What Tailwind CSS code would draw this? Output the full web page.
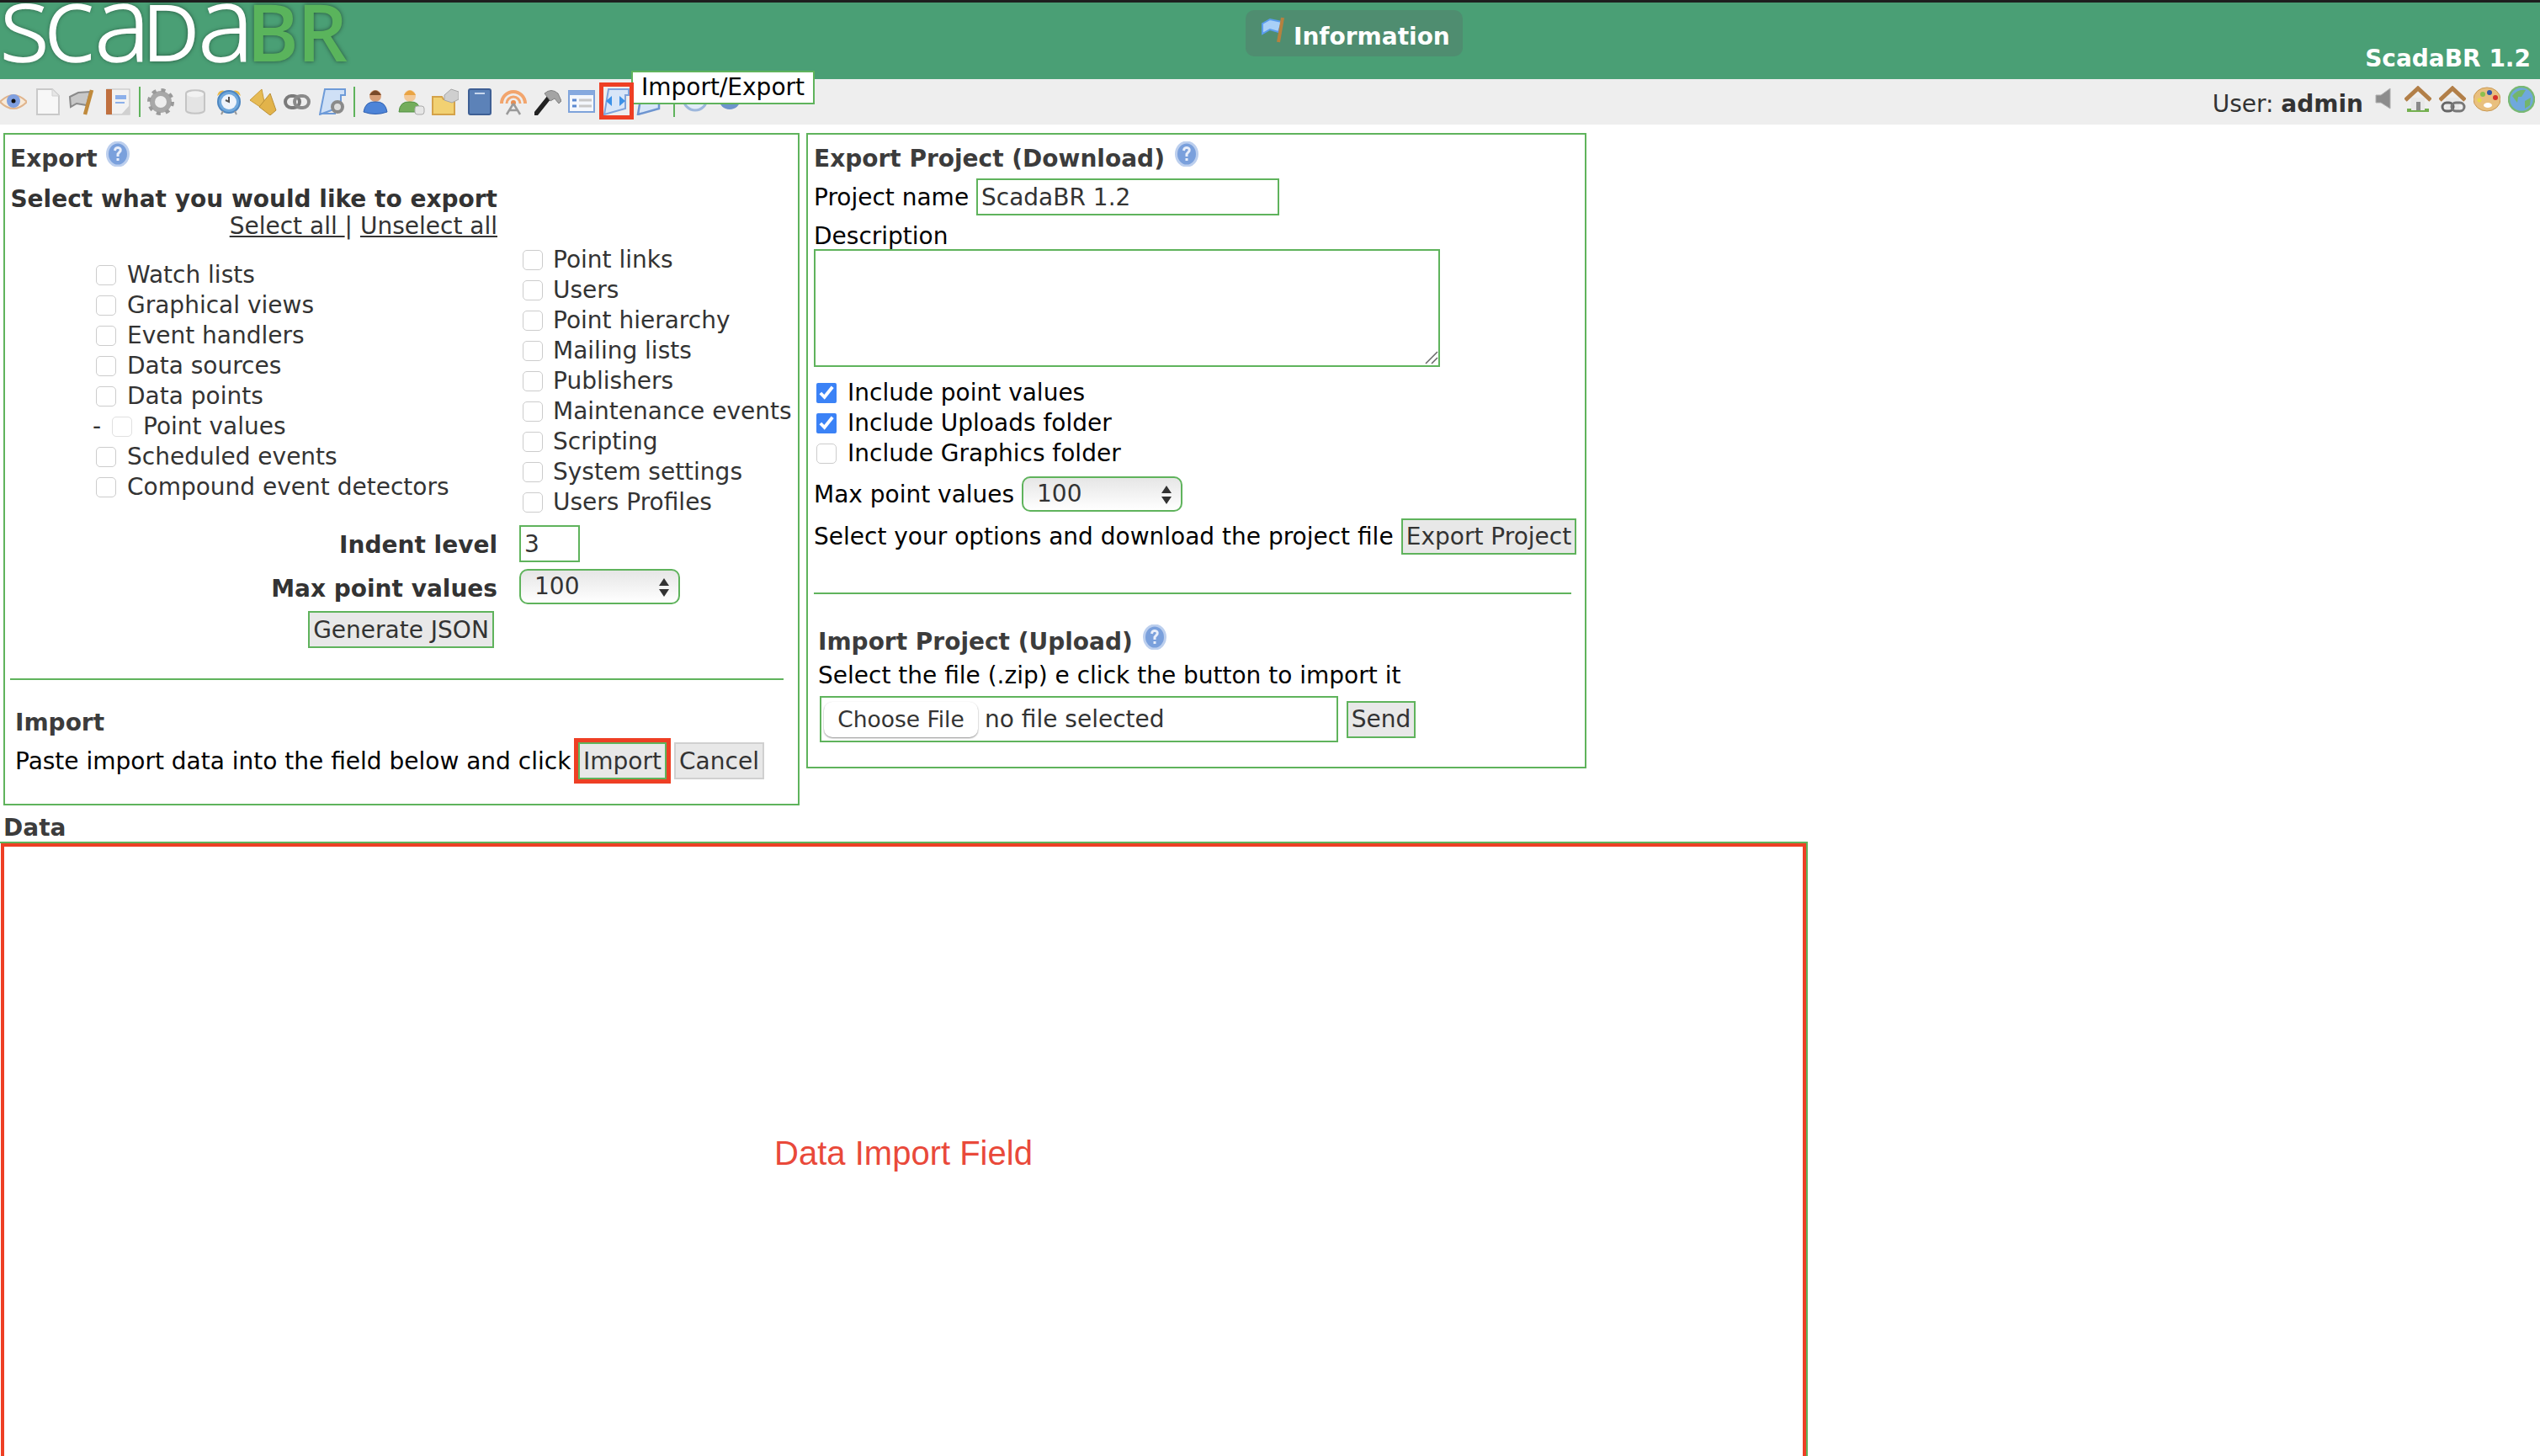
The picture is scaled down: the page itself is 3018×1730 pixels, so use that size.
<!doctype html>
<html lang="en">
<head>
  <meta charset="utf-8">
  <title>ScadaBR - Import/Export</title>
  <script src="https://cdn.jsdelivr.net/npm/@tailwindcss/browser@4"></script>
</head>
<body class="h-[1730px] w-[3018px] overflow-hidden bg-white font-['DejaVu_Sans',sans-serif] text-[28px] leading-[36px] text-[#333]">

  <!-- header -->
  <header class="flex h-[94px] items-start border-t-[3px] border-[#1e1e1e] bg-[#4a9f75]">
    <div class="flex h-[91px] w-[430px] shrink-0 items-baseline pl-[3px] font-['Open_Sans',sans-serif] leading-[42px] text-white [text-shadow:0_0_5px_rgb(0_0_0/0.5)]">
      <span class="-ml-[3px] w-[54px] text-[126px] font-light [-webkit-text-stroke:1.5px_white]">s</span>
      <span class="-ml-[2px] w-[62px] text-[126px] font-light [-webkit-text-stroke:1.5px_white]">c</span>
      <span class="-ml-[2px] w-[63px] text-[126px] font-light [-webkit-text-stroke:1.5px_white]">a</span>
      <span class="-ml-[6px] w-[69px] text-[94px] font-normal">D</span>
      <span class="-ml-[3px] w-[64px] text-[126px] font-light [-webkit-text-stroke:1.5px_white]">a</span>
      <span class="-ml-[6px] w-[62px] text-[94px] font-semibold text-[#5ab45c]">B</span>
      <span class="-ml-[2px] text-[94px] font-semibold text-[#5ab45c]">R</span>
    </div>
    <div class="mt-[9px] ml-[1050px] flex h-[55px] w-[258px] items-center rounded-[10px] bg-[#4f8d70] pl-[17px] pt-[8px] font-bold text-white">
      <svg class="mr-[8px] mb-[16px] h-[32px] w-[32px] blur-[0.5px]" viewBox="0 0 32 32"><path d="M3 8 L12 3 L26 6 L22 18 L12 15 L3 20 Z" fill="#a9d0f7" stroke="#5a9cec" stroke-width="2"/><path d="M27 1 L22 30" stroke="#b5813f" stroke-width="4"/></svg>
      <span>Information</span>
    </div>
    <div class="mt-[49px] mr-[11px] ml-auto font-bold leading-[36px] text-white">ScadaBR 1.2</div>
  </header>

  <!-- toolbar -->
  <nav class="relative flex h-[54px] items-center justify-between bg-[#eeeeee]">
    <div class="flex h-[36px] items-center gap-[8.5px] [&>svg]:h-[32px] [&>svg]:w-[32px] [&>svg]:shrink-0 [&>svg]:blur-[0.5px]">
      <!-- eye -->
      <svg viewBox="0 0 32 32"><path d="M0 16 Q16 0 32 16 Q16 32 0 16 Z" fill="#f8ead8" stroke="#e0b48c" stroke-width="2"/><circle cx="16" cy="15" r="8" fill="#7f9fe0"/><circle cx="16" cy="15" r="2.5" fill="#111"/></svg>
      <!-- page -->
      <svg viewBox="0 0 32 32"><path d="M3 1 H21 L29 9 V31 H3 Z" fill="#f7f7f7" stroke="#c9c9c9" stroke-width="2"/><path d="M21 1 V9 H29" fill="#e6e6e6" stroke="#d0d0d0"/></svg>
      <!-- flag -->
      <svg viewBox="0 0 32 32"><path d="M2 10 L12 5 L26 4 L22 20 L10 18 L3 22 Z" fill="#c8c8c8" stroke="#8a8a8a" stroke-width="2"/><path d="M28 2 L20 31" stroke="#c08a3c" stroke-width="4.5"/></svg>
      <!-- notebook -->
      <svg class="ml-[2.5px]" viewBox="0 0 32 32"><rect x="3" y="1" width="27" height="30" fill="#f2f2f2" stroke="#bdbdbd"/><rect x="2" y="1" width="7" height="30" fill="#c0703f"/><rect x="13" y="8" width="13" height="5" fill="#8cb0ea"/><rect x="13" y="16" width="11" height="2" fill="#8cb0ea"/><path d="M30 20 V31 H20 Z" fill="#d0d0d0"/></svg>
      <div class="h-[36px] w-[2px] bg-[#5fb35c]"></div>
      <!-- gear -->
      <svg viewBox="0 0 32 32"><circle cx="16" cy="16" r="10" fill="none" stroke="#a8a8a8" stroke-width="6"/><circle cx="16" cy="16" r="14" fill="none" stroke="#9a9a9a" stroke-width="4" stroke-dasharray="5 6"/></svg>
      <!-- database -->
      <svg viewBox="0 0 32 32"><path d="M5 6 C5 1 27 1 27 6 V26 C27 31 5 31 5 26 Z" fill="#e4e4e4" stroke="#c4c4c4" stroke-width="2"/><ellipse cx="16" cy="7" rx="10" ry="3.5" fill="#f2f2f2"/></svg>
      <!-- alarm clock -->
      <svg viewBox="0 0 32 32"><path d="M2 9 Q4 1 11 3 Z M30 9 Q28 1 21 3 Z" fill="#e9b94a"/><circle cx="16" cy="16" r="13" fill="#6fa8dc" stroke="#4d86c0" stroke-width="2"/><circle cx="16" cy="16" r="9" fill="#eef4fb"/><path d="M16 10 V16 L12 14" stroke="#555" stroke-width="2" fill="none"/><path d="M7 31 L9 27 M25 31 L23 27" stroke="#999" stroke-width="2"/></svg>
      <!-- bells -->
      <svg viewBox="0 0 32 32"><path d="M0 14 L14 1 L17 16 L12 22 Z" fill="#e6bb55" stroke="#c79a3a"/><path d="M11 22 L24 6 L31 26 L24 32 Z" fill="#e2b34a" stroke="#b98f36"/></svg>
      <!-- link -->
      <svg viewBox="0 0 32 32"><rect x="2" y="9" width="17" height="14" rx="7" fill="none" stroke="#7a7a7a" stroke-width="4"/><rect x="13" y="9" width="17" height="14" rx="7" fill="none" stroke="#8a8a8a" stroke-width="4"/></svg>
      <!-- script + gear -->
      <svg class="ml-[1.5px]" viewBox="0 0 32 32"><path d="M7 1 H31 V8 H26 V22 L1 31 Z" fill="#cfe0f6" stroke="#6e9bd8" stroke-width="2"/><path d="M1 29 H20 V31 H1 Z" fill="#6e9bd8"/><circle cx="22" cy="22" r="6" fill="#ddd" stroke="#8a8a8a" stroke-width="4"/></svg>
      <div class="h-[36px] w-[2px] bg-[#5fb35c]"></div>
      <!-- user -->
      <svg viewBox="0 0 32 32"><circle cx="16" cy="9" r="7" fill="#d89f78"/><path d="M9 8 Q16 -3 23 8 Z" fill="#7a4a2a"/><path d="M2 28 Q4 15 16 16 Q28 15 30 28 Q16 33 2 28 Z" fill="#4d84d8" stroke="#2f5fae"/></svg>
      <!-- user + db -->
      <svg class="ml-[2px]" viewBox="0 0 32 32"><circle cx="14" cy="9" r="7" fill="#f3c998"/><path d="M7 8 Q14 -3 21 8 Z" fill="#e9a443"/><path d="M1 28 Q2 15 14 16 Q26 15 26 28 Z" fill="#74ad5c" stroke="#4f8f3f"/><rect x="20" y="21" width="11" height="10" rx="3" fill="#e6e6e6" stroke="#aaa"/></svg>
      <!-- folder -->
      <svg viewBox="0 0 32 32"><path d="M1 10 H12 L14 13 H27 V31 H1 Z" fill="#f2d172" stroke="#d4a24a" stroke-width="2"/><path d="M15 8 L23 1 L32 4 V13 L24 17 L15 14 Z" fill="#cfcfcf" stroke="#a5a5a5"/></svg>
      <!-- book -->
      <svg viewBox="0 0 32 32"><rect x="3" y="1" width="26" height="30" rx="2" fill="#5c82b8" stroke="#3e5f94" stroke-width="2"/><rect x="10" y="5" width="12" height="2" fill="#c9d8ee"/></svg>
      <!-- antenna -->
      <svg viewBox="0 0 32 32"><path d="M2 18 A14 14 0 0 1 30 18" fill="none" stroke="#f2a56d" stroke-width="4"/><path d="M8 18 A8 8 0 0 1 24 18" fill="none" stroke="#f2a56d" stroke-width="3"/><circle cx="16" cy="17" r="3" fill="#e88d50"/><path d="M16 18 L8 31 M16 18 L24 31 M11 26 H21" stroke="#9a9a9a" stroke-width="2.5" fill="none"/></svg>
      <!-- hammer -->
      <svg viewBox="0 0 32 32"><path d="M2 30 L18 10" stroke="#222" stroke-width="5.5" stroke-linecap="round"/><path d="M12 6 Q20 -1 28 6 L32 15 L29 18 L24 12 L19 15 Z" fill="#a4a4a4" stroke="#808080"/></svg>
      <!-- form -->
      <svg viewBox="0 0 32 32"><rect x="1" y="3" width="30" height="25" fill="#f4f7fc" stroke="#7ea3db" stroke-width="2"/><rect x="1" y="3" width="30" height="5" fill="#86a9df"/><path d="M5 14 H10 M5 21 H10" stroke="#5a88d0" stroke-width="3"/><path d="M13 14 H28 M13 21 H28" stroke="#c8c8c8" stroke-width="3"/></svg>
      <!-- import/export -->
      <svg viewBox="0 0 32 32"><path d="M7 1 H31 V8 H27 V24 L2 31 Z" fill="#d8e6f8" stroke="#7ea3db" stroke-width="2"/><path d="M11 9 L4 15 L11 21 Z M20 9 L27 15 L20 21 Z" fill="#3d92e8"/></svg>
      <!-- next, under the tooltip -->
      <svg viewBox="0 0 32 32"><path d="M7 1 H31 V8 H27 V24 L2 31 Z" fill="#d8e6f8" stroke="#6e95d0" stroke-width="2.5"/></svg>
      <div class="ml-[3px] h-[36px] w-[2px] bg-[#5fb35c]"></div>
      <svg viewBox="0 0 32 32"><circle cx="16" cy="12" r="14" fill="#e2ecf8" stroke="#9db7dc" stroke-width="3"/></svg>
      <svg viewBox="0 0 32 32"><circle cx="16" cy="12" r="13" fill="#6d93cc"/><circle cx="16" cy="12" r="7" fill="#dbe6f6"/></svg>
    </div>
    <div class="flex items-center pr-[6px]">
      <span class="mt-[5px] mr-[19px]">User: <b>admin</b></span>
      <div class="mb-[6px] flex items-center gap-[9px] [&>svg]:h-[32px] [&>svg]:w-[32px] [&>svg]:blur-[0.5px]">
        <svg class="mr-[4px] -ml-[7px] !w-[24px]" viewBox="0 0 24 32"><path d="M3 11 H9 L20 3 V27 L9 20 H3 Z" fill="#8c8c8c" stroke="#b0b0b0"/></svg>
        <svg viewBox="0 0 32 32"><path d="M3 29 H29" stroke="#74b04f" stroke-width="4"/><rect x="8" y="14" width="16" height="15" fill="#e8e8e8"/><rect x="14" y="19" width="5" height="10" fill="#8a8a8a"/><path d="M1 17 L16 3 L31 17" fill="none" stroke="#b27f48" stroke-width="5"/></svg>
        <svg viewBox="0 0 32 32"><rect x="8" y="14" width="16" height="15" fill="#e8e8e8"/><path d="M1 17 L16 3 L31 17" fill="none" stroke="#b27f48" stroke-width="5"/><rect x="4" y="20" width="13" height="10" rx="5" fill="none" stroke="#666" stroke-width="3"/><rect x="15" y="20" width="15" height="10" rx="5" fill="none" stroke="#777" stroke-width="3"/></svg>
        <svg viewBox="0 0 32 32"><ellipse cx="16" cy="16" rx="16" ry="14" fill="#e9c07f" stroke="#c99852"/><circle cx="11" cy="10" r="3" fill="#8cbf4f"/><circle cx="19" cy="8" r="3" fill="#3256a8"/><circle cx="26" cy="14" r="3" fill="#d5322a"/><circle cx="7" cy="17" r="2.5" fill="#e8d94a"/><ellipse cx="17" cy="23" rx="5" ry="3" fill="#fff"/></svg>
        <svg viewBox="0 0 32 32"><circle cx="16" cy="16" r="15" fill="#6fa8dc" stroke="#78b874" stroke-width="2.5"/><path d="M5 12 Q12 3 21 5 L16 13 L12 13 L11 20 Z M20 18 L27 14 L26 23 L20 27 Z" fill="#73b56c"/></svg>
      </div>
    </div>

    <!-- tooltip and highlight over the toolbar -->
    <div class="absolute top-[-10px] left-[750px] flex h-[40px] w-[218px] items-center justify-center border-2 border-[#5fb35c] bg-white text-black">Import/Export</div>
    <div class="absolute top-[4px] left-[712px] h-[44px] w-[41px] border-[5px] border-[#ee3f24]"></div>
  </nav>

  <main class="pt-[10px]">
    <div class="flex items-start gap-[8px] pl-[4px]">

      <!-- export + import -->
      <section class="h-[799px] w-[946px] shrink-0 border-2 border-[#5fb35c] pl-[6px] pt-[12px]">
        <h2 class="flex h-[32px] items-center pt-[1px] font-bold text-[#3c3c3c]">Export
          <svg class="mb-[12px] ml-[10px] h-[30px] w-[28px] blur-[0.4px]" viewBox="0 0 28 30"><ellipse cx="14" cy="15" rx="12.5" ry="14" fill="#7aa0dc" stroke="#bccfee" stroke-width="3"/><path d="M10.5 11 Q11 7 14.5 7.5 Q18 8 17 11.5 L14 15 V18 M14 20 V23" fill="none" stroke="#e8eefa" stroke-width="3"/></svg>
        </h2>
        <div class="mt-[17px] w-[579px] text-right">
          <div class="h-[30px] leading-[31px] font-bold">Select what you would like to export</div>
          <div class="h-[32px]"><a class="underline" href="#">Select all </a> | <a class="underline" href="#">Unselect all</a></div>
        </div>

        <div class="mt-[7px] flex">
          <ul class="w-[609px] pl-[102px] pt-[19px]">
            <li class="flex h-[36px] items-center gap-[13px]"><input type="checkbox" class="h-[24px] w-[24px] appearance-none rounded-[5px] border border-[#cccccc] bg-white">Watch lists</li>
            <li class="flex h-[36px] items-center gap-[13px]"><input type="checkbox" class="h-[24px] w-[24px] appearance-none rounded-[5px] border border-[#cccccc] bg-white">Graphical views</li>
            <li class="flex h-[36px] items-center gap-[13px]"><input type="checkbox" class="h-[24px] w-[24px] appearance-none rounded-[5px] border border-[#cccccc] bg-white">Event handlers</li>
            <li class="flex h-[36px] items-center gap-[13px]"><input type="checkbox" class="h-[24px] w-[24px] appearance-none rounded-[5px] border border-[#cccccc] bg-white">Data sources</li>
            <li class="flex h-[36px] items-center gap-[13px]"><input type="checkbox" class="h-[24px] w-[24px] appearance-none rounded-[5px] border border-[#cccccc] bg-white">Data points</li>
            <li class="-ml-[4px] flex h-[36px] items-center gap-[12px]"><span class="w-[11px]">-</span><input type="checkbox" class="mr-[1px] h-[24px] w-[24px] appearance-none rounded-[5px] border border-[#e0e0e0] bg-white">Point values</li>
            <li class="flex h-[36px] items-center gap-[13px]"><input type="checkbox" class="h-[24px] w-[24px] appearance-none rounded-[5px] border border-[#cccccc] bg-white">Scheduled events</li>
            <li class="flex h-[36px] items-center gap-[13px]"><input type="checkbox" class="h-[24px] w-[24px] appearance-none rounded-[5px] border border-[#cccccc] bg-white">Compound event detectors</li>
          </ul>
          <ul class="pt-[1px]">
            <li class="flex h-[36px] items-center gap-[12px]"><input type="checkbox" class="h-[24px] w-[24px] appearance-none rounded-[5px] border border-[#cccccc] bg-white">Point links</li>
            <li class="flex h-[36px] items-center gap-[12px]"><input type="checkbox" class="h-[24px] w-[24px] appearance-none rounded-[5px] border border-[#cccccc] bg-white">Users</li>
            <li class="flex h-[36px] items-center gap-[12px]"><input type="checkbox" class="h-[24px] w-[24px] appearance-none rounded-[5px] border border-[#cccccc] bg-white">Point hierarchy</li>
            <li class="flex h-[36px] items-center gap-[12px]"><input type="checkbox" class="h-[24px] w-[24px] appearance-none rounded-[5px] border border-[#cccccc] bg-white">Mailing lists</li>
            <li class="flex h-[36px] items-center gap-[12px]"><input type="checkbox" class="h-[24px] w-[24px] appearance-none rounded-[5px] border border-[#cccccc] bg-white">Publishers</li>
            <li class="flex h-[36px] items-center gap-[12px]"><input type="checkbox" class="h-[24px] w-[24px] appearance-none rounded-[5px] border border-[#cccccc] bg-white">Maintenance events</li>
            <li class="flex h-[36px] items-center gap-[12px]"><input type="checkbox" class="h-[24px] w-[24px] appearance-none rounded-[5px] border border-[#cccccc] bg-white">Scripting</li>
            <li class="flex h-[36px] items-center gap-[12px]"><input type="checkbox" class="h-[24px] w-[24px] appearance-none rounded-[5px] border border-[#cccccc] bg-white">System settings</li>
            <li class="flex h-[36px] items-center gap-[12px]"><input type="checkbox" class="h-[24px] w-[24px] appearance-none rounded-[5px] border border-[#cccccc] bg-white">Users Profiles</li>
          </ul>
        </div>

        <div class="mt-[9px] flex h-[44px] items-center">
          <label class="w-[579px] pt-[3px] text-right font-bold">Indent level</label>
          <input class="ml-[26px] h-[44px] w-[72px] border-2 border-[#5fb35c] px-[4px]" value="3">
        </div>
        <div class="mt-[8px] flex h-[42px] items-center">
          <label class="w-[579px] pt-[6px] text-right font-bold">Max point values</label>
          <div class="relative ml-[26px]">
            <select class="h-[42px] w-[191px] appearance-none rounded-[10px] border-2 border-[#5fb35c] bg-linear-to-b from-[#e6e6e6] to-white pl-[16px]"><option>100</option></select>
            <svg class="absolute top-[10px] right-[12px] h-[24px] w-[14px]" viewBox="0 0 14 24"><path d="M7 1 L13 10 H1 Z M7 23 L13 14 H1 Z" fill="#333"/></svg>
          </div>
        </div>
        <div class="mt-[8px] flex w-[575px] justify-end">
          <button class="h-[44px] w-[221px] border-2 border-[#5fb35c] bg-[#e8e8e8] pt-[1px]">Generate JSON</button>
        </div>

        <hr class="mt-[36px] w-[919px] border-t-2 border-[#5fb35c]">

        <h2 class="mt-[35px] h-[31px] pl-[6px] leading-[32px] font-bold text-[#3c3c3c]">Import</h2>
        <div class="mt-[8px] flex h-[44px] items-center pl-[6px] text-black">
          <span class="w-[669px] whitespace-nowrap pt-[1px]">Paste import data into the field below and click</span>
          <button class="h-[44px] w-[105px] border-2 border-[#5fb35c] bg-[#e8e8e8] pt-[1px] text-[#333] outline-[5px] outline-[#ee3f24]">Import</button>
          <button class="ml-[9px] h-[44px] w-[107px] border-2 border-[#d0d0d0] bg-[#e8e8e8] pt-[1px] text-[#333]">Cancel</button>
        </div>
      </section>

      <!-- project export / import -->
      <section class="h-[755px] w-[927px] shrink-0 border-2 border-[#5fb35c] pl-[7px] pt-[12px] text-black">
        <h2 class="flex h-[32px] items-center pt-[1px] font-bold text-[#3c3c3c]">Export Project (Download)
          <svg class="mb-[12px] ml-[12px] h-[30px] w-[28px] blur-[0.4px]" viewBox="0 0 28 30"><ellipse cx="14" cy="15" rx="12.5" ry="14" fill="#7aa0dc" stroke="#bccfee" stroke-width="3"/><path d="M10.5 11 Q11 7 14.5 7.5 Q18 8 17 11.5 L14 15 V18 M14 20 V23" fill="none" stroke="#e8eefa" stroke-width="3"/></svg>
        </h2>
        <div class="mt-[8px] flex h-[44px] items-center">
          <label class="w-[193px] pt-[1px]">Project name</label>
          <input class="h-[44px] w-[360px] border-2 border-[#5fb35c] px-[4px] text-[#333]" value="ScadaBR 1.2">
        </div>
        <div class="mt-[8px] h-[32px] leading-[33px]">Description</div>
        <div class="relative h-[140px] w-[744px]">
          <textarea class="block h-full w-full resize-none border-2 border-[#5fb35c]"></textarea>
          <svg class="absolute right-[2px] bottom-[3px] h-[16px] w-[16px]" viewBox="0 0 16 16"><path d="M1 15 L15 1 M8 15 L15 8" stroke="#666" stroke-width="1.5"/></svg>
        </div>

        <div class="mt-[12px]">
          <label class="flex h-[36px] items-center gap-[13px] pl-[3px] pt-[1px]"><input type="checkbox" checked class="m-0 h-[24px] w-[24px] accent-[#3b82f6]">Include point values</label>
          <label class="flex h-[36px] items-center gap-[13px] pl-[3px] pt-[1px]"><input type="checkbox" checked class="m-0 h-[24px] w-[24px] accent-[#3b82f6]">Include Uploads folder</label>
          <label class="flex h-[36px] items-center gap-[13px] pl-[3px] pt-[1px]"><input type="checkbox" class="h-[24px] w-[24px] appearance-none rounded-[5px] border border-[#cccccc] bg-white">Include Graphics folder</label>
        </div>

        <div class="mt-[10px] flex h-[42px] items-center">
          <label class="w-[247px] pt-[1px]">Max point values</label>
          <div class="relative">
            <select class="h-[42px] w-[191px] appearance-none rounded-[10px] border-2 border-[#5fb35c] bg-linear-to-b from-[#e6e6e6] to-white pl-[16px] text-[#333]"><option>100</option></select>
            <svg class="absolute top-[10px] right-[12px] h-[24px] w-[14px]" viewBox="0 0 14 24"><path d="M7 1 L13 10 H1 Z M7 23 L13 14 H1 Z" fill="#333"/></svg>
          </div>
        </div>
        <div class="mt-[8px] flex h-[43px] items-center">
          <span class="w-[698px] whitespace-nowrap pt-[1px]">Select your options and download the project file</span>
          <button class="h-[43px] w-[208px] border-2 border-[#5fb35c] bg-[#e8e8e8] pt-[1px] text-[#333]">Export Project</button>
        </div>

        <hr class="mt-[45px] w-[900px] border-t-2 border-[#5fb35c]">

        <div class="pl-[5px]">
          <h2 class="mt-[40px] flex h-[32px] items-center pt-[1px] font-bold text-[#3c3c3c]">Import Project (Upload)
            <svg class="mb-[12px] ml-[12px] h-[30px] w-[28px] blur-[0.4px]" viewBox="0 0 28 30"><ellipse cx="14" cy="15" rx="12.5" ry="14" fill="#7aa0dc" stroke="#bccfee" stroke-width="3"/><path d="M10.5 11 Q11 7 14.5 7.5 Q18 8 17 11.5 L14 15 V18 M14 20 V23" fill="none" stroke="#e8eefa" stroke-width="3"/></svg>
          </h2>
          <div class="mt-[8px] h-[32px] leading-[33px]">Select the file (.zip) e click the button to import it</div>
          <div class="mt-[9px] flex items-center">
            <div class="ml-[2px] flex h-[55px] w-[616px] items-center border-2 border-[#5fb35c] pl-[3px] text-[#333]">
              <button class="h-[42px] w-[183px] rounded-[10px] bg-white text-[26.5px] shadow-[0_1px_2px_rgb(0_0_0/0.45)]">Choose File</button>
              <span class="ml-[8px]">no file selected</span>
            </div>
            <button class="ml-[10px] h-[44px] w-[82px] border-2 border-[#5fb35c] bg-[#e8e8e8] text-[#333]">Send</button>
          </div>
        </div>
      </section>
    </div>

    <!-- data field -->
    <div class="mt-[10px] h-[32px] pl-[4px] leading-[34px] font-bold text-[#3c3c3c]">Data</div>
    <div class="mt-[1px] w-[2148px] border-t-2 border-r-2 border-[#5fb35c] pl-[1px]">
      <div class="flex h-[736px] items-center justify-center border-[4px] border-[#ee3f24] font-['Liberation_Sans',sans-serif] text-[40px] text-[#e9493a]">Data Import Field</div>
    </div>
  </main>

</body>
</html>
